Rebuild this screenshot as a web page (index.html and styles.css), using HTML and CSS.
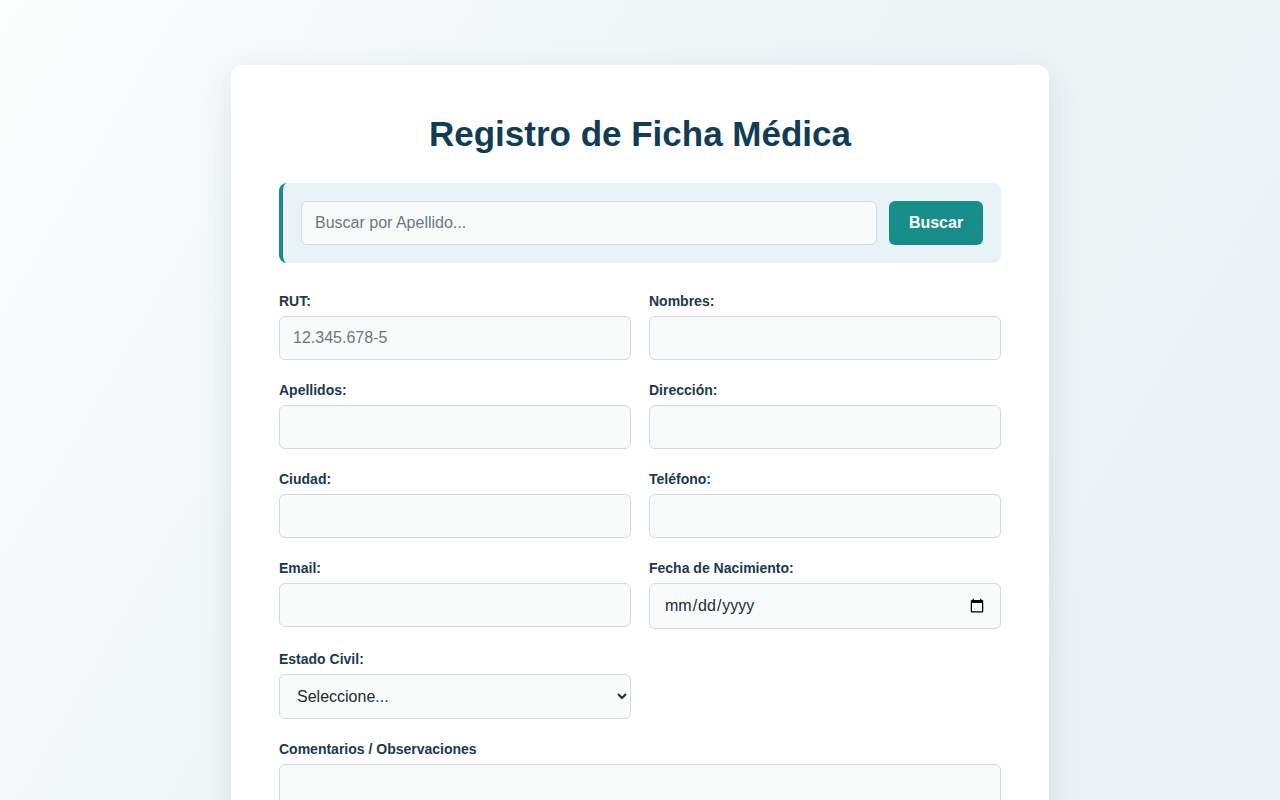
FILE: index.html
```html
<!DOCTYPE html>
<html lang="es">
<head>
<meta charset="utf-8">
<title>Registro de Ficha Médica</title>
<link rel="stylesheet" href="styles.css">
</head>
<body>
<main class="card">
  <h1 class="title">Registro de Ficha Médica</h1>
  <div class="search">
    <input class="field search-input" type="text" placeholder="Buscar por Apellido...">
    <button class="btn" type="button">Buscar</button>
  </div>
  <form class="form">
    <div class="group">
      <label class="label">RUT:</label>
      <input class="field" type="text" placeholder="12.345.678-5">
    </div>
    <div class="group">
      <label class="label">Nombres:</label>
      <input class="field" type="text">
    </div>
    <div class="group">
      <label class="label">Apellidos:</label>
      <input class="field" type="text">
    </div>
    <div class="group">
      <label class="label">Dirección:</label>
      <input class="field" type="text">
    </div>
    <div class="group">
      <label class="label">Ciudad:</label>
      <input class="field" type="text">
    </div>
    <div class="group">
      <label class="label">Teléfono:</label>
      <input class="field" type="text">
    </div>
    <div class="group">
      <label class="label">Email:</label>
      <input class="field" type="email">
    </div>
    <div class="group">
      <label class="label">Fecha de Nacimiento:</label>
      <input class="field date" type="date">
    </div>
    <div class="group">
      <label class="label">Estado Civil:</label>
      <select class="field select">
        <option>Seleccione...</option>
        <option>Soltero/a</option>
        <option>Casado/a</option>
      </select>
    </div>
    <div class="group"></div>
    <div class="group full">
      <label class="label">Comentarios / Observaciones</label>
      <textarea class="field area"></textarea>
    </div>
  </form>
</main>
</body>
</html>
```

FILE: styles.css
```css
* { box-sizing: border-box; }
html, body { margin: 0; }
body {
  min-height: 800px;
  padding: 65px 0 40px;
  font-family: "Liberation Sans", Arial, sans-serif;
  background: linear-gradient(120deg, #fbfdfd 0%, #eff5f7 45%, #e9f2f5 100%);
}
.card {
  width: 818px;
  margin: 0 auto;
  background: #ffffff;
  border-radius: 12px;
  padding: 48px 48px 48px;
  box-shadow: 0 10px 35px rgba(20, 60, 80, 0.12);
}
.title {
  margin: 0 0 29px;
  text-align: center;
  font-size: 35px;
  line-height: 41px;
  font-weight: 700;
  color: #113c56;
}
.search {
  display: flex;
  gap: 12px;
  padding: 18px;
  background: #e8f2f7;
  border-left: 4px solid #178b88;
  border-radius: 8px;
  margin-bottom: 30px;
}
.field {
  display: block;
  width: 100%;
  height: 44px;
  padding: 0 13px;
  border: 1px solid #cfdce2;
  border-radius: 6px;
  background: #f9fbfb;
  font-family: "Liberation Sans", Arial, sans-serif;
  font-size: 16px;
  color: #1c2b35;
}
.field::placeholder { color: #6c7780; }
.search-input { flex: 1; }
.btn {
  width: 94px;
  height: 44px;
  border: 0;
  border-radius: 6px;
  background: #178d8a;
  color: #ffffff;
  font-family: "Liberation Sans", Arial, sans-serif;
  font-size: 16px;
  font-weight: 700;
}
.form {
  display: grid;
  grid-template-columns: 1fr 1fr;
  column-gap: 18px;
  row-gap: 22px;
}
.group { display: flex; flex-direction: column; }
.full { grid-column: 1 / -1; }
.label {
  display: block;
  font-size: 14px;
  line-height: 16px;
  font-weight: 700;
  color: #1a3a4f;
  margin-bottom: 7px;
}
.date { height: 46px; padding: 0 13px 0 14px; }
.select { height: 45px; padding: 0 8px 0 13px; }
.area { height: 100px; resize: vertical; }
```
